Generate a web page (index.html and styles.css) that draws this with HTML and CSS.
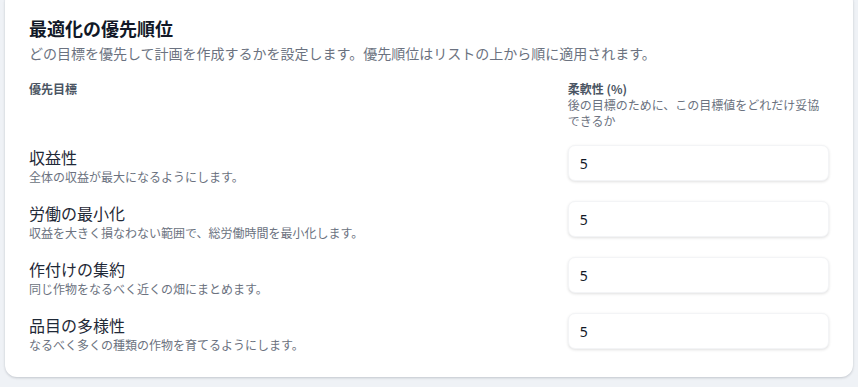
FILE: index.html
```html
<!DOCTYPE html>
<html lang="ja">
<head>
<meta charset="utf-8">
<title>最適化の優先順位</title>
<link rel="stylesheet" href="styles.css">
</head>
<body>
<div class="page">
  <section class="card">
    <h2 class="title">最適化の優先順位</h2>
    <p class="subtitle">どの目標を優先して計画を作成するかを設定します。優先順位はリストの上から順に適用されます。</p>
    <div class="grid">
      <div class="head">優先目標</div>
      <div class="head">
        <div>柔軟性 (%)</div>
        <div class="head-desc">後の目標のために、この目標値をどれだけ妥協できるか</div>
      </div>

      <div class="goal">
        <div class="goal-title">収益性</div>
        <div class="goal-desc">全体の収益が最大になるようにします。</div>
      </div>
      <div class="field"><input class="input" type="text" value="5"></div>

      <div class="goal">
        <div class="goal-title">労働の最小化</div>
        <div class="goal-desc">収益を大きく損なわない範囲で、総労働時間を最小化します。</div>
      </div>
      <div class="field"><input class="input" type="text" value="5"></div>

      <div class="goal">
        <div class="goal-title">作付けの集約</div>
        <div class="goal-desc">同じ作物をなるべく近くの畑にまとめます。</div>
      </div>
      <div class="field"><input class="input" type="text" value="5"></div>

      <div class="goal">
        <div class="goal-title">品目の多様性</div>
        <div class="goal-desc">なるべく多くの種類の作物を育てるようにします。</div>
      </div>
      <div class="field"><input class="input" type="text" value="5"></div>
    </div>
  </section>
</div>
</body>
</html>
```

FILE: styles.css
```css
* { box-sizing: border-box; }
html, body {
  margin: 0;
  padding: 0;
  background: #eff2f6;
  font-family: "Noto Sans CJK JP", "Noto Sans", sans-serif;
  overflow: hidden;
}
.page {
  padding: 0 5px 9px 5px;
}
.card {
  margin-top: -10px;
  background: #ffffff;
  border-radius: 12px;
  box-shadow: 0 1px 3px rgba(15, 23, 42, 0.12), 0 1px 2px rgba(15, 23, 42, 0.08);
  padding: 24px 24px 24px 24px;
}
.title {
  margin: 0;
  font-size: 18px;
  line-height: 28px;
  font-weight: 700;
  color: #111827;
}
.subtitle {
  margin: 1px 0 0 0;
  font-size: 14px;
  line-height: 20px;
  color: #6b7280;
}
.grid {
  margin-top: 18px;
  display: grid;
  grid-template-columns: 2fr 1fr;
  column-gap: 16px;
  row-gap: 16px;
}
.head {
  font-size: 12px;
  line-height: 16px;
  font-weight: 700;
  color: #4b5563;
}
.head-desc {
  font-weight: 400;
  color: #6b7280;
}
.goal-title {
  font-size: 16px;
  line-height: 24px;
  color: #1f2937;
}
.goal-desc {
  font-size: 12px;
  line-height: 16px;
  color: #6b7280;
}
.field {
  display: flex;
}
.input {
  width: 100%;
  height: 36px;
  border: 1px solid #f3f4f6;
  border-radius: 7px;
  box-shadow: 0 1px 3px rgba(0, 0, 0, 0.12);
  background: #ffffff;
  padding: 0 11px;
  font-family: "Noto Sans", sans-serif;
  font-size: 14px;
  color: #111827;
  outline: none;
}
```
